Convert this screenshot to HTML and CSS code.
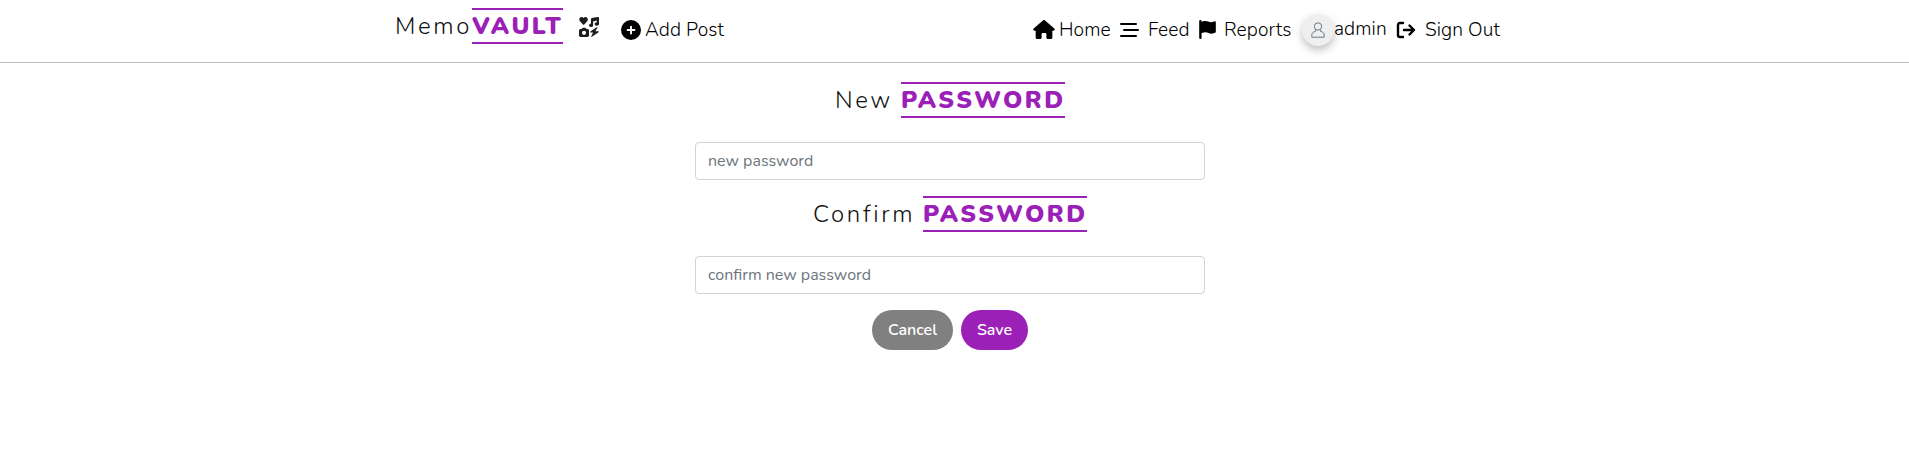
FILE: index.html
```html
<!DOCTYPE html>
<html lang="en">
<head>
<meta charset="utf-8">
<title>MemoVAULT</title>
<link rel="stylesheet" href="styles.css">
</head>
<body>
<header class="navbar">
  <nav class="nav-left">
    <a class="brand"><span class="brand-light">Memo</span><span class="accent accent-brand">VAULT</span></a>
    <svg class="icon icon-brand" viewBox="0 0 512 512"><path d="M225 64C225 28 199 2 168 2c-22 0-40 9-51 24C106 11 91 2 68 2 32 2 8 28 8 64c0 22 9 40 22 54l76 78c7 7 15 7 22 0l76-78c13-14 21-32 21-54z"/><path d="M502 4c6 4 10 11 10 19v158c0 25-25 45-56 45s-56-20-56-45 25-44 56-44V92l-96 23v101c0 24-25 40-54 40s-50-18-50-42 23-42 50-42V55c0-14 8-25 20-28L480 1c8-2 16-1 22 3z"/><path fill-rule="evenodd" d="M81 286c5-8 12-14 22-14h50c10 0 17 6 22 14l12 22h27c23 0 42 18 42 41v120c0 23-19 41-42 41H42c-23 0-42-18-42-41V349c0-23 19-41 42-41h27zM128 352a54 54 0 1 0 0 108 54 54 0 0 0 0-108z"/><path d="M468 274c9-12-3-22-15-14L292 374c-12 9-8 24 7 24h62l-48 96c-7 14 5 22 17 13l171-119c13-9 9-24-7-24h-72z"/></svg>
    <a class="link"><svg class="icon icon-add" viewBox="0 0 512 512"><path fill-rule="evenodd" d="M256 0a256 256 0 1 1 0 512 256 256 0 0 1 0-512zM232 344a24 24 0 0 0 48 0v-64h64a24 24 0 0 0 0-48h-64v-64a24 24 0 0 0-48 0v64h-64a24 24 0 0 0 0 48h64z"/></svg><span class="label label-add">Add Post</span></a>
  </nav>
  <nav class="nav-right">
    <a class="link link-home"><svg class="icon icon-home" viewBox="0 0 576 512"><path d="M576 256c0 18-15 32-32 32h-32l1 192c0 18-14 32-32 32h-97c-18 0-32-14-32-32v-96c0-18-14-32-32-32h-64c-18 0-32 14-32 32v96c0 18-14 32-32 32H96c-18 0-32-14-32-32V288H32c-18 0-32-14-32-32 0-9 3-17 10-24L266 8c14-11 30-11 44 0l255 224c8 7 12 15 11 24z"/></svg><span class="label label-home">Home</span></a>
    <a class="link link-feed"><svg class="icon icon-feed" viewBox="0 0 19 14"><path d="M1 1h15M4 7h14M1 13h15"/></svg><span class="label label-feed">Feed</span></a>
    <a class="link link-reports"><svg class="icon icon-flag" viewBox="0 0 448 512"><path d="M64 32a32 32 0 0 0-64 0v448a32 32 0 0 0 64 0V352l64-16c41-10 85-6 123 13 44 22 95 25 142 8l34-13c13-5 21-17 21-30V66c0-23-24-38-45-28l-10 5c-46 23-100 23-147 0-35-18-75-22-113-13L64 48z"/></svg><span class="label label-reports">Reports</span></a>
    <a class="link link-profile"><span class="avatar"><svg class="icon-person" viewBox="0 0 14 16"><circle cx="7" cy="4.500" r="3.700"/><path d="M4.800 7.800 4.500 9.300C2 10 .8 11 .8 13.300v1.900h12.400v-1.900c0-2.300-1.200-3.300-3.700-4l-.3-1.500"/></svg></span><span class="label label-admin">admin</span></a>
    <a class="link link-signout"><svg class="icon icon-signout" viewBox="0 0 20 18"><path d="M7 2H4Q2 2 2 4v10q0 2 2 2h3M8 9h10M13.500 4.500 18 9l-4.500 4.500"/></svg><span class="label label-signout">Sign Out</span></a>
  </nav>
</header>
<main class="form">
  <h4 class="title"><span class="title-new">New</span><span class="accent accent-title">PASSWORD</span></h4>
  <input class="field" type="password" placeholder="new password">
  <h4 class="title title-second"><span class="title-confirm">Confirm</span><span class="accent accent-title">PASSWORD</span></h4>
  <input class="field field-confirm" type="password" placeholder="confirm new password">
  <div class="actions"><button class="btn btn-cancel" type="button">Cancel</button><button class="btn btn-save" type="button">Save</button></div>
</main>
</body>
</html>
```
FILE: styles.css
```css
* { box-sizing: border-box; }
body { margin: 0; background: #fff; color: #101214; font-family: Nunito, Lato, sans-serif; }
.navbar { height: 63px; border-bottom: 1px solid #bebebe; display: flex; justify-content: space-between; padding: 0 408px 0 395px; }
.nav-left, .nav-right, .link, .brand { display: flex; align-items: flex-start; }
.brand { padding-top: 8px; }
.brand-light { width: 77px; font-size: 24px; font-weight: 300; line-height: 36px; letter-spacing: 2.600px; white-space: nowrap; }
.accent { display: block; height: 36px; border-top: 2px solid #9b20b8; border-bottom: 2px solid #9b20b8; color: #9b20b8; font-size: 24px; line-height: 32px; font-weight: 900; white-space: nowrap; }
.accent-brand { width: 91px; letter-spacing: 2.500px; }
.icon { display: block; flex: none; fill: #000; }
.icon-brand { width: 20px; height: 20px; margin: 17px 22px 0 16px; fill: #1c1c1c; }
.link { color: #000; }
.label { display: block; padding-top: 16px; font-size: 19.200px; line-height: 29px; letter-spacing: .1px; white-space: nowrap; font-weight: 300; }
.icon-add { width: 20px; height: 20px; margin: 20px 4px 0 0; }
.icon-home { width: 22px; height: 19px; margin: 20px 4px 0 0; }
.label-home { width: 61px; }
.icon-feed, .icon-signout { fill: none; stroke: #000; stroke-width: 2; stroke-linecap: round; stroke-linejoin: round; }
.icon-feed { width: 19px; height: 14px; margin: 23px 9px 0 0; }
.label-feed { width: 51px; }
.icon-flag { width: 17px; height: 19px; margin: 20px 8px 0 0; }
.label-reports { width: 78px; }
.avatar { width: 32px; height: 32px; margin-top: 14px; border-radius: 50%; background: #efefef; box-shadow: 0 4px 8px rgba(0,0,0,.25); display: flex; align-items: center; justify-content: center; }
.icon-person { width: 14px; height: 16px; fill: none; stroke: #6c7680; stroke-width: 1; }
.label-admin { width: 62px; padding-top: 15px; }
.icon-signout { width: 20px; height: 18px; margin: 21px 9px 0 0; stroke-width: 2.400; }
.label-signout { width: 76px; }
.form { width: 510px; margin: 19px auto 0 695px; }
.title { display: flex; justify-content: center; height: 36px; margin: 0 0 24px; font-size: 24px; line-height: 36px; font-weight: 300; }
.title-new { width: 66px; letter-spacing: 2.500px; }
.title-confirm { width: 110px; letter-spacing: 2.700px; }
.accent-title { width: 164px; letter-spacing: 2.400px; }
.title-second { margin-top: 16px; }
.field { display: block; width: 510px; height: 38px; border: 1px solid #ced4da; border-radius: 4px; padding: 6px 12px; font: 16px/24px Nunito, Lato, sans-serif; background: #fff; }
.field::placeholder { color: #6c757d; opacity: 1; }
.actions { display: flex; justify-content: center; gap: 8px; margin-top: 16px; }
.btn { height: 40px; border: 0; border-radius: 20px; padding: 0; color: #fff; font: 600 16px/24px Nunito, Lato, sans-serif; }
.btn-cancel { width: 81px; background: #808080; }
.btn-save { width: 67px; background: #9b20b8; }
```
